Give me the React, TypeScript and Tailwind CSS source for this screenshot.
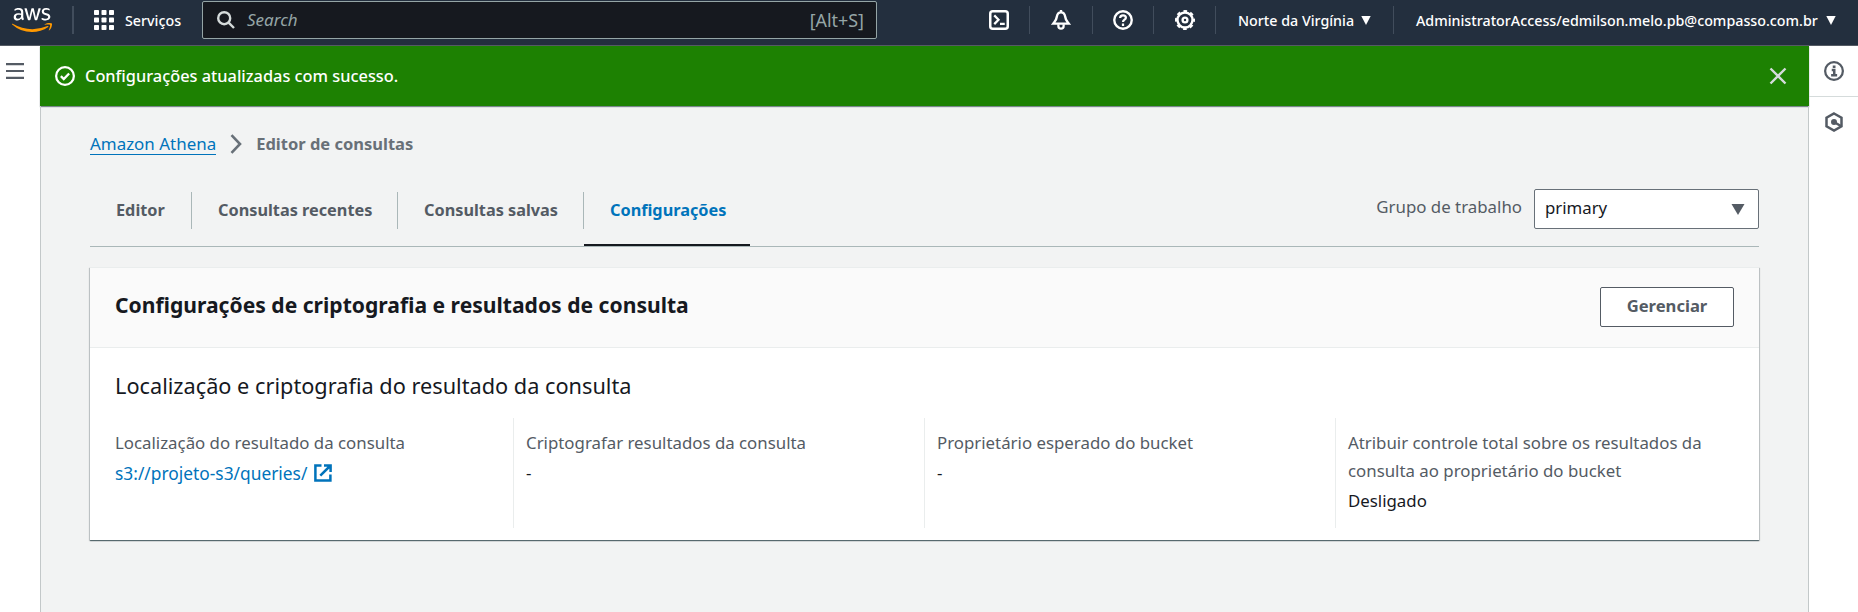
import React from "react";
import { FaAws } from "react-icons/fa";

type IconProps = { className?: string; children: React.ReactNode; stroke?: number };

function Icon({ className = "", children, stroke = 2 }: IconProps) {
  return (
    <svg
      viewBox="0 0 16 16"
      fill="none"
      stroke="currentColor"
      strokeWidth={stroke}
      className={"size-5 shrink-0 " + className}
    >
      {children}
    </svg>
  );
}

function AwsLogo() {
  return (
    <div className="relative h-8 w-10 shrink-0 overflow-hidden">
      <FaAws className="absolute inset-0 h-8 w-10 text-white [clip-path:inset(0_0_13px_0)]" />
      <FaAws className="absolute inset-0 h-8 w-10 text-[#ff9900] [clip-path:inset(19px_0_0_0)]" />
    </div>
  );
}

function Separator({ className = "w-px" }: { className?: string }) {
  return <div className={"h-7 shrink-0 bg-[#414d5c] " + className} />;
}

function Caret({ className = "" }: { className?: string }) {
  return (
    <svg viewBox="0 0 10 9" className={"h-[9px] w-[10px] shrink-0 " + className} fill="currentColor">
      <path d="M.3 0h9.4L5 9z" />
    </svg>
  );
}

function TopBar() {
  return (
    <header className="flex h-[46px] shrink-0 items-start border-b border-[#545b64] bg-[#232f3e] text-white">
      <div className="flex h-10 w-full items-center text-[14.27px] leading-5 font-medium">
        <div className="ml-3">
          <AwsLogo />
        </div>
        <Separator className="ml-[20px] w-[2px]" />
        <svg viewBox="0 0 20 20" className="ml-[20px] size-5 shrink-0" fill="currentColor">
          {[0, 7.5, 15].map((y) =>
            [0, 7.5, 15].map((x) => <rect key={x + "-" + y} x={x} y={y} width="5" height="5" rx="0.8" />),
          )}
        </svg>
        <span className="ml-[11px] w-[77px] shrink-0 pt-[2px]">Serviços</span>
        <div className="mt-px flex h-[38px] w-[675px] shrink-0 items-center self-start rounded-[2px] border border-[#95a5a6] bg-[#16191f] px-[14px] font-normal text-[#95a5a6]">
          <svg viewBox="0 0 18 18" className="size-[18px] text-[#d5dbdb]" fill="none" stroke="currentColor" strokeWidth="2.4">
            <circle cx="7.2" cy="7.2" r="6" />
            <path d="M11.6 11.6l5.4 5.4" />
          </svg>
          <span className="ml-[12px] flex-1 text-[17px] italic">Search</span>
          <span className="-mr-[2px] text-[17.9px]">[Alt+S]</span>
        </div>
        <Icon className="ml-[112px]">
          <rect x="1" y="1" width="14" height="14" rx="2" />
          <path d="M4.200 4.300L7.600 7.800l-3.400 3.500M8.800 11h3.800" strokeWidth="1.800" />
        </Icon>
        <Separator className="ml-[20px] w-px" />
        <Icon className="ml-[21px]">
          <path
            d="M8 0v2M8 1.900c-2.200 0-3 1.400-3.300 3.300C4.300 8.300 3.500 8.800 1.800 10.900h12.400C12.500 8.800 11.700 8.300 11.300 5.200 11 3.300 10.200 1.900 8 1.900z"
            strokeWidth="1.900"
          />
          <path d="M5.900 11.300v1.500a2.100 2.100 0 0 0 4.200 0v-1.500" strokeWidth="1.800" />
        </Icon>
        <Separator className="ml-[21px] w-px" />
        <Icon className="ml-[20px]">
          <circle cx="8" cy="8" r="7" strokeWidth="1.900" />
          <path d="M5.700 6.400c0-1.300 1-2.200 2.300-2.200s2.300.9 2.300 2c0 1.500-2.300 1.500-2.300 3.300M8 10.800v1.900" strokeWidth="1.800" />
        </Icon>
        <Separator className="ml-[20px] w-px" />
        <Icon className="ml-[21px]">
          <circle cx="8" cy="8" r="6" strokeWidth="1.900" />
          <circle cx="8" cy="8" r="7.2" strokeWidth="1.600" strokeDasharray="2.950 2.705" strokeDashoffset="1.475" />
          <circle cx="8" cy="8" r="1.900" strokeWidth="1.900" />
        </Icon>
        <Separator className="ml-[20px] w-px" />
        <span className="ml-[22px] w-[116px] shrink-0 whitespace-nowrap pt-[2px]">Norte da Virgínia</span>
        <Caret className="ml-[7px]" />
        <Separator className="ml-[22px] w-px" />
        <span className="ml-[22px] w-[402px] shrink-0 whitespace-nowrap pt-[2px]">
          AdministratorAccess/edmilson.melo.pb@compasso.com.br
        </span>
        <Caret className="ml-[8px]" />
      </div>
    </header>
  );
}

function SuccessBanner() {
  return (
    <div className="flex h-[60px] shrink-0 items-center bg-[#1d8102] pr-[22px] pl-[15px] text-white shadow-[0_1px_1px_0_rgba(0,28,36,0.5)]">
      <Icon>
        <circle cx="8" cy="8" r="7.1" strokeWidth="1.800" />
        <path d="M4.700 8.100l2.300 2.300 4.300-4.400" strokeWidth="1.900" />
      </Icon>
      <span className="ml-[10px] flex-1 text-[16.35px] font-medium">Configurações atualizadas com sucesso.</span>
      <svg viewBox="0 0 18 18" className="size-[18px] text-[#d5dbdb]" fill="none" stroke="currentColor" strokeWidth="2.400">
        <path d="M1.500 1.500l15 15M16.500 1.500l-15 15" />
      </svg>
    </div>
  );
}

function Breadcrumbs() {
  return (
    <nav className="flex h-6 items-center">
      <a className="border-b border-[#0073bb] text-[16.94px] leading-[21px] text-[#0073bb]">Amazon Athena</a>
      <svg viewBox="0 0 12 20" className="ml-[14px] h-5 w-3 text-[#687078]" fill="none" stroke="currentColor" strokeWidth="2.600">
        <path d="M1.500 1.200l8.500 8.800-8.500 8.800" />
      </svg>
      <span className="ml-[14px] text-[16.5px] font-bold text-[#687078]">Editor de consultas</span>
    </nav>
  );
}

function Tab({ label, className = "" }: { label: string; className?: string }) {
  return (
    <div
      className={
        "h-[37px] shrink-0 border-r border-[#aab7b8] text-[16.3px] leading-[36px] font-bold whitespace-nowrap text-[#545b64] " +
        className
      }
    >
      {label}
    </div>
  );
}

function Tabs() {
  return (
    <div className="mt-[32px] flex h-[59px] items-start border-b border-[#aab7b8]">
      <Tab label="Editor" className="mt-[4px] w-[102px] pl-[26px]" />
      <Tab label="Consultas recentes" className="mt-[4px] w-[206px] pl-[26px]" />
      <Tab label="Consultas salvas" className="mt-[4px] w-[186px] pl-[26px]" />
      <div className="mt-[4px] h-[54px] w-[166px] shrink-0 border-b-2 border-[#16191f] pl-[26px] text-[16.3px] leading-[36px] font-bold text-[#0073bb]">
        Configurações
      </div>
      <span className="ml-auto text-[16.85px] leading-[37px] text-[#545b64]">Grupo de trabalho</span>
      <div className="mt-px ml-[12px] flex h-10 w-[225px] items-center justify-between rounded-[2px] border border-[#687078] bg-white pr-[13px] pl-[10px] text-[16.8px] leading-[36px] text-[#16191f]">
        <span className="-mt-[3px]">primary</span>
        <svg viewBox="0 0 14 11" className="h-[11px] w-[14px] text-[#545b64]" fill="currentColor">
          <path d="M.5 0h13L7 11z" />
        </svg>
      </div>
    </div>
  );
}

function ExternalIcon() {
  return (
    <svg viewBox="0 0 18 18" className="size-[18px]" fill="none" stroke="currentColor" strokeWidth="2.500">
      <path d="M7.500 1.600H1.400v15h15v-6" />
      <path d="M6.300 11.700L16 2M10 1.400h6.600V8" />
    </svg>
  );
}

function Field({ label, className = "", children }: { label: React.ReactNode; className?: string; children: React.ReactNode }) {
  return (
    <div className={"h-[110px] shrink-0 border-[#eaeded] pt-[11px] text-[16.84px] leading-7 whitespace-nowrap " + className}>
      <div className="text-[#545b64]">{label}</div>
      <div className="mt-[2px] text-[#16191f]">{children}</div>
    </div>
  );
}

function SettingsCard() {
  return (
    <section className="mt-[20px] h-[273px] border-t border-[#eaeded] bg-white shadow-[0_1px_1px_0_rgba(0,28,36,0.5),1px_1px_1px_0_rgba(0,28,36,0.15),-1px_1px_1px_0_rgba(0,28,36,0.15)]">
      <div className="flex h-20 items-start justify-between border-b border-[#eaeded] bg-[#fafafa] pr-[25px] pl-[25px]">
        <h2 className="mt-[21px] text-[21.1px] leading-[31px] font-bold text-[#16191f]">
          Configurações de criptografia e resultados de consulta
        </h2>
        <button className="mt-[19px] h-10 w-[134px] rounded-[2px] border border-[#545b64] bg-white pb-[2px] text-[16.6px] leading-[36px] font-bold text-[#545b64]">
          Gerenciar
        </button>
      </div>
      <h3 className="mt-[22px] ml-[25px] text-[21.72px] leading-[32px] text-[#16191f]">
        Localização e criptografia do resultado da consulta
      </h3>
      <div className="mt-[16px] ml-[25px] flex">
        <Field label="Localização do resultado da consulta" className="w-[398px]">
          <a className="flex items-center gap-[7px] text-[#0073bb]">
            <span className="text-[17.35px]">s3://projeto-s3/queries/</span>
            <ExternalIcon />
          </a>
        </Field>
        <Field label="Criptografar resultados da consulta" className="w-[411px] border-l pl-3">
          -
        </Field>
        <Field label="Proprietário esperado do bucket" className="w-[411px] border-l pl-3">
          -
        </Field>
        <Field
          label={
            <>
              Atribuir controle total sobre os resultados da
              <br />
              consulta ao proprietário do bucket
            </>
          }
          className="w-[400px] border-l pl-3"
        >
          Desligado
        </Field>
      </div>
    </section>
  );
}

export default function App() {
  return (
    <div className="flex h-[612px] w-[1858px] flex-col overflow-hidden bg-white font-['Noto_Sans','Open_Sans',sans-serif]">
      <TopBar />
      <div className="flex min-h-0 flex-1">
        <aside className="w-10 shrink-0 pt-[17px] pl-[6px] text-[#545b64]">
          <svg viewBox="0 0 18 16" className="h-4 w-[18px]" fill="currentColor">
            <path d="M0 0h18v2.200H0zM0 6.900h18v2.200H0zM0 13.800h18V16H0z" />
          </svg>
        </aside>
        <main className="flex w-[1769px] shrink-0 flex-col bg-[#f2f3f3]">
          <SuccessBanner />
          <div className="flex-1 border-x border-[#c3c8c9] px-[49px] pt-[26px]">
            <Breadcrumbs />
            <Tabs />
            <SettingsCard />
          </div>
        </main>
        <aside className="flex w-[49px] shrink-0 flex-col text-[#545b64]">
          <div className="h-[51px] border-b border-[#d5dbdb] pt-[15px] pl-[15px]">
            <Icon>
              <circle cx="8" cy="8" r="7.1" strokeWidth="1.800" />
              <path d="M6.200 7.200h2v4.300M5.700 11.300h4.800M7 4.500h2.200" />
            </Icon>
          </div>
          <div className="pt-[15px] pl-[15px]">
            <Icon>
              <path d="M8 1.200l6 3.400v6.800l-6 3.400-6-3.400V4.600z" />
              <circle cx="8" cy="8" r="1.400" fill="currentColor" />
              <path d="M8 8l5.800 3.400" />
            </Icon>
          </div>
        </aside>
      </div>
    </div>
  );
}
